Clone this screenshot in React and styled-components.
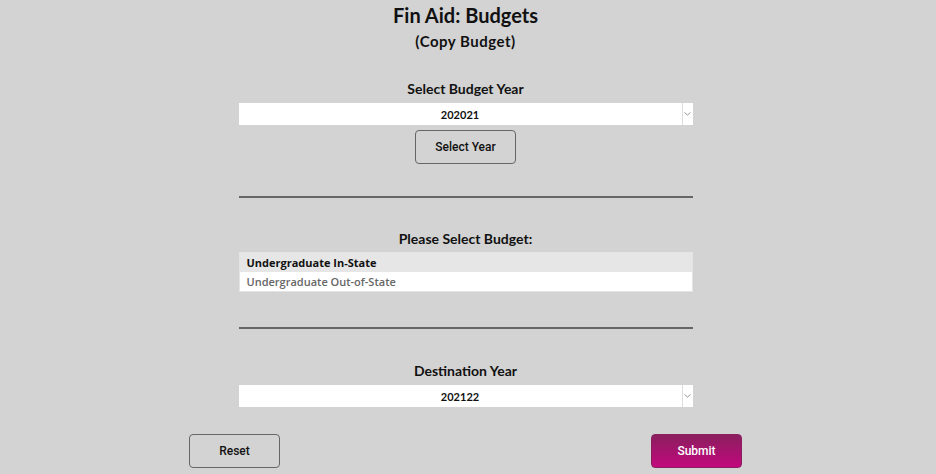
import React from "react";
import styled, { createGlobalStyle } from "styled-components";

const GlobalStyle = createGlobalStyle`
  html, body {
    margin: 0;
    padding: 0;
    background: #d3d3d3;
  }
  body {
    font-family: Lato, "Liberation Sans", sans-serif;
    color: #111;
  }
  *, *::before, *::after {
    box-sizing: border-box;
  }
`;

const Page = styled.div`
  width: 931px;
  height: 474px;
  display: flex;
  flex-direction: column;
  align-items: center;
  overflow: hidden;
`;

const Title = styled.h1`
  margin: 3px 0 0;
  font-size: 20px;
  line-height: 24px;
  font-weight: 700;
`;

const Subtitle = styled.h2`
  margin: 5px 0 0;
  font-size: 15px;
  line-height: 18px;
  font-weight: 700;
  letter-spacing: 0.5px;
`;

const Section = styled.section`
  width: 454px;
  display: flex;
  flex-direction: column;
  align-items: center;
  margin-top: ${(p) => p.$top}px;
`;

const Label = styled.div`
  font-size: 14px;
  line-height: 16px;
  font-weight: 700;
  margin-bottom: ${(p) => p.$gap ?? 6}px;
`;

const SelectBox = styled.div`
  width: 100%;
  height: 22px;
  background: #fff;
  display: flex;
  align-items: center;
`;

const SelectValue = styled.div`
  flex: 1;
  text-align: center;
  font-size: 11px;
  font-weight: 700;
`;

const Arrow = styled.div`
  width: 11px;
  height: 100%;
  border-left: 1px solid #ddd;
  display: flex;
  align-items: center;
  justify-content: center;
`;

const Button = styled.button`
  width: ${(p) => p.$w}px;
  height: 34px;
  border-radius: 4px;
  font-family: Roboto, "Liberation Sans", sans-serif;
  font-size: 12px;
  font-weight: 500;
  cursor: pointer;
  border: 1px solid ${(p) => (p.$primary ? "#8b1e5f" : "#666")};
  color: ${(p) => (p.$primary ? "#fff" : "#111")};
  background: ${(p) =>
    p.$primary ? "linear-gradient(180deg, #8a1f5e 0%, #c2087d 100%)" : "#d3d3d3"};
`;

const Spacer = styled.div`
  height: ${(p) => p.$h}px;
`;

const Divider = styled.hr`
  width: 454px;
  margin: ${(p) => p.$top}px 0 0;
  border: none;
  border-top: 2px solid #666;
`;

const List = styled.div`
  width: 454px;
  border: 1px solid #e4e4e4;
  background: #fff;
  display: flex;
  flex-direction: column;
`;

const ListItem = styled.div`
  height: 19px;
  display: flex;
  align-items: center;
  padding-left: 7px;
  font-family: "Open Sans", Lato, sans-serif;
  font-size: 11px;
  font-weight: ${(p) => (p.$selected ? 700 : 600)};
  color: ${(p) => (p.$selected ? "#111" : "#666")};
  background: ${(p) => (p.$selected ? "#e6e6e6" : "#fff")};
`;

const Actions = styled.div`
  width: 553px;
  display: flex;
  justify-content: space-between;
  margin-top: 27px;
`;

const Chevron = () => (
  <svg width="7" height="4" viewBox="0 0 7 4">
    <path d="M0.5 0.5 L3.5 3 L6.5 0.5" fill="none" stroke="#999" strokeWidth="1" />
  </svg>
);

const YearSelect = ({ value }) => (
  <SelectBox>
    <SelectValue>{value}</SelectValue>
    <Arrow>
      <Chevron />
    </Arrow>
  </SelectBox>
);

export default function App() {
  return (
    <Page>
      <GlobalStyle />
      <Title>Fin Aid: Budgets</Title>
      <Subtitle>(Copy Budget)</Subtitle>

      <Section $top={31}>
        <Label>Select Budget Year</Label>
        <YearSelect value="202021" />
        <Spacer $h={5} />
        <Button $w={101}>Select Year</Button>
      </Section>

      <Divider $top={32} />

      <Section $top={33}>
        <Label $gap={5}>Please Select Budget:</Label>
        <List>
          <ListItem $selected>Undergraduate In-State</ListItem>
          <ListItem>Undergraduate Out-of-State</ListItem>
        </List>
      </Section>

      <Divider $top={35} />

      <Section $top={34}>
        <Label>Destination Year</Label>
        <YearSelect value="202122" />
      </Section>

      <Actions>
        <Button $w={91}>Reset</Button>
        <Button $w={91} $primary>
          Submit
        </Button>
      </Actions>
    </Page>
  );
}
